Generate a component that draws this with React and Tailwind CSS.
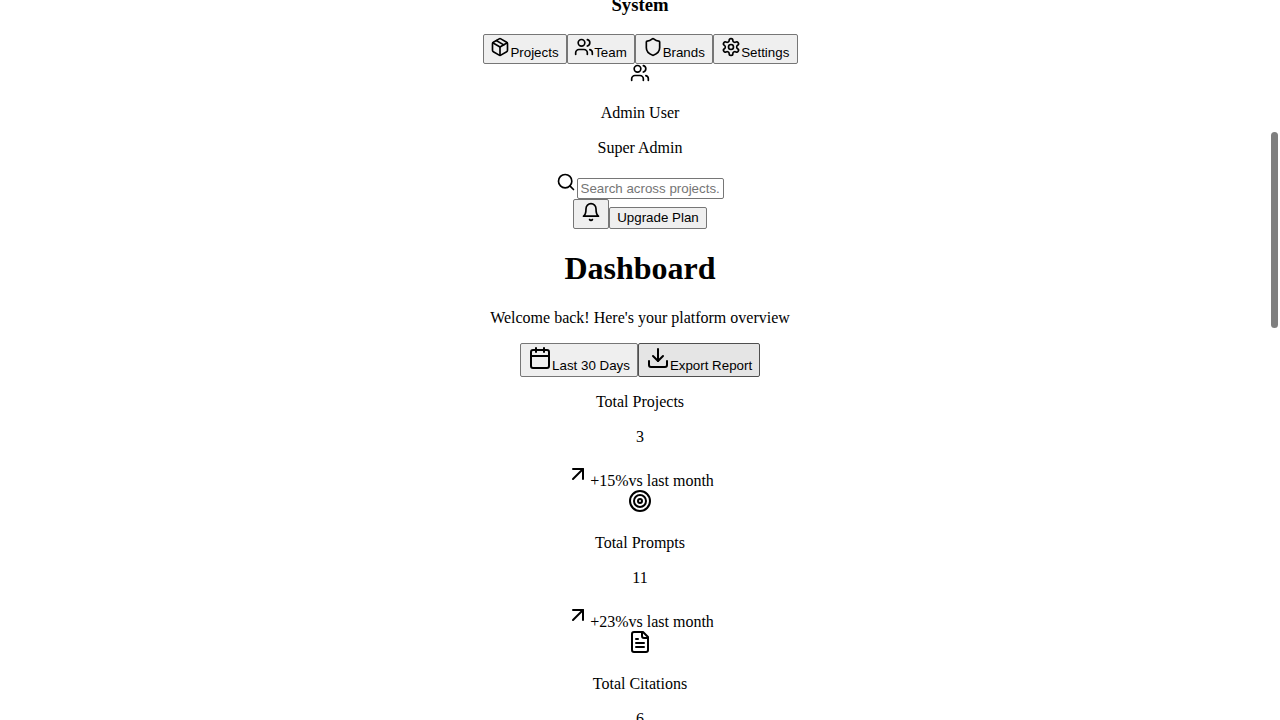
import React from "react";
import { Package, Users, Shield, Search, Calendar, Download, ArrowUpRight, Target } from "lucide-react";

function OutlineIcon({ size = 24, className, children }) {
  return (
    <svg width={size} height={size} viewBox="0 0 24 24" fill="none" stroke="currentColor" strokeWidth="2" strokeLinecap="round" strokeLinejoin="round" className={className}>
      {children}
    </svg>
  );
}

function Bell(props) {
  return (
    <OutlineIcon {...props}>
      <path d="M6 8a6 6 0 0 1 12 0c0 7 3 9 3 9H3s3-2 3-9" />
      <path d="M10.3 21a1.94 1.94 0 0 0 3.4 0" />
    </OutlineIcon>
  );
}

function FileText(props) {
  return (
    <OutlineIcon {...props}>
      <path d="M15 2H6a2 2 0 0 0-2 2v16a2 2 0 0 0 2 2h12a2 2 0 0 0 2-2V7Z" />
      <path d="M14 2v4a2 2 0 0 0 2 2h4" />
      <path d="M10 9H8" />
      <path d="M16 13H8" />
      <path d="M16 17H8" />
    </OutlineIcon>
  );
}

function Settings(props) {
  return (
    <OutlineIcon {...props}>
      <path d="M12.22 2h-.44a2 2 0 0 0-2 2v.18a2 2 0 0 1-1 1.73l-.43.25a2 2 0 0 1-2 0l-.15-.08a2 2 0 0 0-2.73.73l-.22.38a2 2 0 0 0 .73 2.73l.15.1a2 2 0 0 1 1 1.72v.51a2 2 0 0 1-1 1.74l-.15.09a2 2 0 0 0-.73 2.73l.22.38a2 2 0 0 0 2.73.73l.15-.08a2 2 0 0 1 2 0l.43.25a2 2 0 0 1 1 1.73V20a2 2 0 0 0 2 2h.44a2 2 0 0 0 2-2v-.18a2 2 0 0 1 1-1.73l.43-.25a2 2 0 0 1 2 0l.15.08a2 2 0 0 0 2.73-.73l.22-.39a2 2 0 0 0-.73-2.73l-.15-.08a2 2 0 0 1-1-1.74v-.5a2 2 0 0 1 1-1.74l.15-.09a2 2 0 0 0 .73-2.73l-.22-.38a2 2 0 0 0-2.73-.73l-.15.08a2 2 0 0 1-2 0l-.43-.25a2 2 0 0 1-1-1.73V4a2 2 0 0 0-2-2z" />
      <circle cx="12" cy="12" r="3" />
    </OutlineIcon>
  );
}

const buttonShape =
  "block shrink-0 whitespace-nowrap rounded-[2px] border text-center font-['Liberation_Sans',Arial,sans-serif] text-[13.333px] leading-[15px] text-black";
const button = buttonShape + " border-[#767676] bg-[#efefef]";

function NavButton({ icon: Icon, label, width }) {
  return (
    <button className={button + " h-[29.5px] pb-px " + width}>
      <Icon size={20} className="inline-block align-baseline" />
      {label}
    </button>
  );
}

function Stat({ title, value, change, icon: Icon }) {
  return (
    <section className="h-[141px] shrink-0">
      <p className="h-[35px]">{title}</p>
      <p className="h-[34px]">{value}</p>
      {change && (
        <div className="flex h-[27px] justify-center">
          <ArrowUpRight size={24} className="shrink-0" />
          <span className="pt-[10px]">{change}</span>
          <span className="pt-[10px]">vs last month</span>
        </div>
      )}
      {Icon && <Icon size={24} className="mx-auto block" />}
    </section>
  );
}

export default function App() {
  return (
    <div className="relative flex h-[720px] w-full flex-col overflow-hidden bg-white text-center font-['Liberation_Serif','Times_New_Roman',serif] text-[16px] leading-[18px] text-black">
      <h3 className="-mt-[6px] h-[40px] shrink-0 text-[18.72px] font-bold leading-[21px]">System</h3>
      <nav className="flex h-[29px] shrink-0 justify-center">
        <NavButton icon={Package} label="Projects" width="w-[84px]" />
        <NavButton icon={Users} label="Team" width="w-[68px]" />
        <NavButton icon={Shield} label="Brands" width="w-[78.5px]" />
        <NavButton icon={Settings} label="Settings" width="w-[84.5px]" />
      </nav>
      <Users size={20} className="mx-auto block shrink-0" />
      <p className="mt-[21px] h-[35px] shrink-0">Admin User</p>
      <p className="h-[33px] shrink-0">Super Admin</p>
      <div className="flex h-[27px] shrink-0 justify-center">
        <Search size={20} className="-ml-px mr-px shrink-0" />
        <input
          type="text"
          placeholder="Search across projects..."
          className="mt-[6px] h-[21px] w-[147px] rounded-[2px] border border-[#767676] bg-white px-[3px] font-['Liberation_Sans',Arial,sans-serif] text-[13.333px] leading-[15px] placeholder:text-[#757575]"
        />
      </div>
      <div className="flex h-[30px] shrink-0 items-end justify-center">
        <button className={button + " h-[30px] w-[36px] pb-[4px]"}>
          <Bell size={20} className="mx-auto block" />
        </button>
        <button className={button + " h-[22px] w-[98px] pb-px"}>Upgrade Plan</button>
      </div>
      <h1 className="mt-[21px] h-[59px] shrink-0 text-[32px] font-bold leading-[36px]">Dashboard</h1>
      <p className="h-[34px] shrink-0">Welcome back! Here's your platform overview</p>
      <div className="flex h-[50px] shrink-0 justify-center">
        <button className={button + " h-[34px] w-[118px] pb-[2px]"}>
          <Calendar size={24} className="inline-block align-baseline" />
          Last 30 Days
        </button>
        <button className={buttonShape + " h-[34px] w-[122px] border-[#4f4f4f] bg-[#e5e5e5] pb-[2px]"}>
          <Download size={24} className="inline-block align-baseline" />
          Export Report
        </button>
      </div>
      <Stat title="Total Projects" value="3" change="+15%" icon={Target} />
      <Stat title="Total Prompts" value="11" change="+23%" icon={FileText} />
      <Stat title="Total Citations" value="6" />
      <div className="absolute right-[2px] top-[132px] h-[196px] w-[7px] rounded-full bg-[#7f7f7f]" />
    </div>
  );
}
